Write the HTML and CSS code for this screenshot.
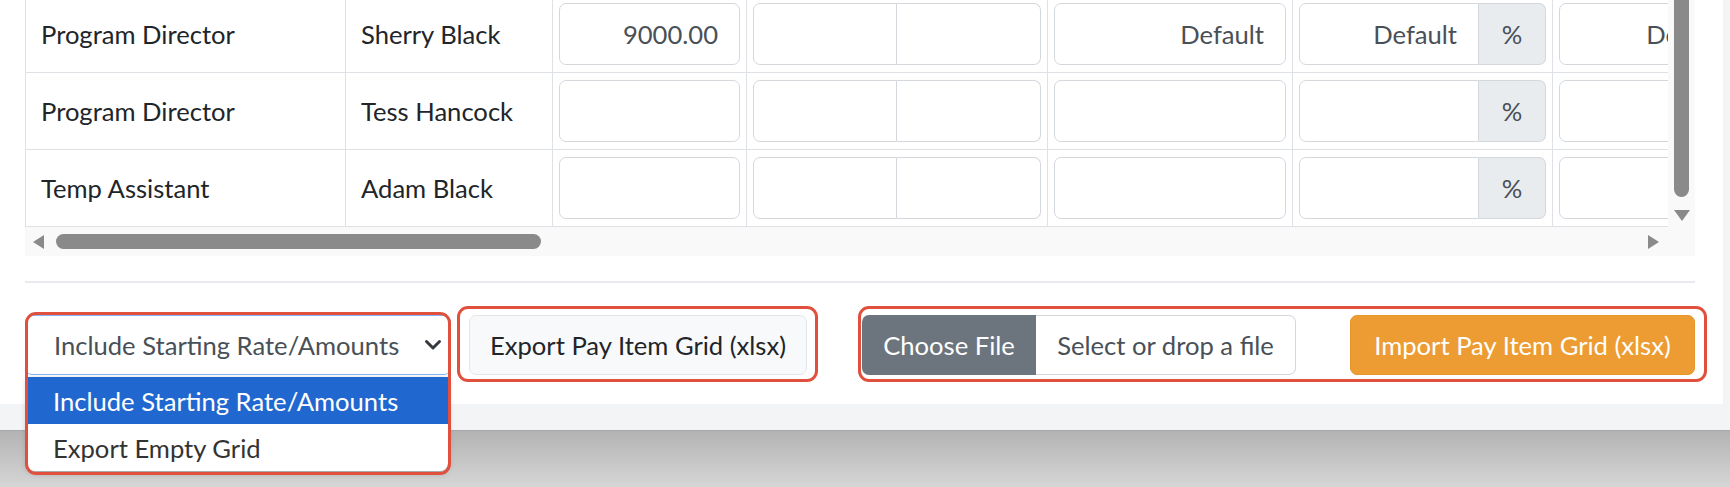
FILE: index.html
```html
<!DOCTYPE html>
<html lang="en">
<head>
<meta charset="utf-8">
<title>Pay Item Grid</title>
<link rel="stylesheet" href="styles.css">
</head>
<body>
<div class="page">
  <div class="card">
    <div class="grid-scroll">
      <div class="viewport">
        <div class="grid">
          <div class="row">
            <div class="cell text">Program Director</div>
            <div class="cell text">Sherry Black</div>
            <div class="cell"><div class="input">9000.00</div></div>
            <div class="cell"><div class="igroup"><div class="input half"></div><div class="input half"></div></div></div>
            <div class="cell"><div class="input">Default</div></div>
            <div class="cell"><div class="igroup"><div class="input grow">Default</div><div class="addon">%</div></div></div>
            <div class="cell"><div class="input">Default</div></div>
          </div>
          <div class="row">
            <div class="cell text">Program Director</div>
            <div class="cell text">Tess Hancock</div>
            <div class="cell"><div class="input"></div></div>
            <div class="cell"><div class="igroup"><div class="input half"></div><div class="input half"></div></div></div>
            <div class="cell"><div class="input"></div></div>
            <div class="cell"><div class="igroup"><div class="input grow"></div><div class="addon">%</div></div></div>
            <div class="cell"><div class="input"></div></div>
          </div>
          <div class="row">
            <div class="cell text">Temp Assistant</div>
            <div class="cell text">Adam Black</div>
            <div class="cell"><div class="input"></div></div>
            <div class="cell"><div class="igroup"><div class="input half"></div><div class="input half"></div></div></div>
            <div class="cell"><div class="input"></div></div>
            <div class="cell"><div class="igroup"><div class="input grow"></div><div class="addon">%</div></div></div>
            <div class="cell"><div class="input"></div></div>
          </div>
        </div>
      </div>
      <div class="vbar">
        <div class="vthumb"></div>
        <svg class="arrow-down" width="18" height="13" viewBox="0 0 18 13"><path d="M1 1h16L9 12z" fill="#8a8a8a"/></svg>
      </div>
      <div class="hbar">
        <svg class="arrow-left" width="13" height="16" viewBox="0 0 13 16"><path d="M12 1v14L1 8z" fill="#8a8a8a"/></svg>
        <div class="hthumb"></div>
        <svg class="arrow-right" width="13" height="16" viewBox="0 0 13 16"><path d="M1 1v14L12 8z" fill="#8a8a8a"/></svg>
      </div>
      <div class="corner"></div>
    </div>

    <div class="divider"></div>

    <div class="actions">
      <div class="select-wrap">
        <div class="select">
          <span>Include Starting Rate/Amounts</span>
          <svg class="chev" width="18" height="12" viewBox="0 0 18 12"><path d="M2.5 2.5l6.5 6.5 6.5-6.5" fill="none" stroke="#343a40" stroke-width="3" stroke-linecap="round" stroke-linejoin="round"/></svg>
        </div>
        <div class="dropdown">
          <div class="option active">Include Starting Rate/Amounts</div>
          <div class="option">Export Empty Grid</div>
        </div>
        <div class="mark mark-select"></div>
      </div>

      <div class="export-wrap">
        <button class="btn btn-light">Export Pay Item Grid (xlsx)</button>
        <div class="mark mark-export"></div>
      </div>

      <div class="import-wrap">
        <div class="file-group">
          <div class="file-btn">Choose File</div>
          <div class="file-label">Select or drop a file</div>
        </div>
        <button class="btn btn-orange">Import Pay Item Grid (xlsx)</button>
        <div class="mark mark-import"></div>
      </div>
    </div>
  </div>
</div>
<div class="desk"></div>
</body>
</html>
```

FILE: styles.css
```css
* { box-sizing: border-box; }

html, body {
  margin: 0;
  padding: 0;
}

body {
  font-family: "Lato", "Noto Sans", sans-serif;
  font-size: 25.6px;
  color: #212529;
  background: #f3f4f6;
  overflow: hidden;
}

.page {
  background: #f3f4f6;
  padding: 0 7px 26px 0;
}

.card {
  background: #fff;
  height: 404px;
  padding: 0 28px 0 25px;
}

/* ---- scrolling grid ---- */
.grid-scroll {
  display: grid;
  grid-template-columns: 1fr 27px;
  grid-template-rows: 227px 29px;
}

.viewport {
  overflow: hidden;
}

.grid {
  margin-top: -5px;
  width: 1734px;
  border-top: 1px solid #dee2e6;
  border-left: 1px solid #dee2e6;
}

.row {
  display: grid;
  grid-template-columns: 320px 207px 194px 301px 245px 260px 206px;
}

.cell {
  border-right: 1px solid #dee2e6;
  border-bottom: 1px solid #dee2e6;
  padding: 7px 6px;
  display: flex;
  align-items: center;
}

.cell.text {
  padding: 7px 15px;
  height: 77px;
  white-space: nowrap;
}

.input {
  height: 62px;
  width: 100%;
  border: 1px solid #d4d8dd;
  border-radius: 7px;
  background: #fff;
  color: #495057;
  display: flex;
  align-items: center;
  justify-content: flex-end;
  padding: 0 21px;
  white-space: nowrap;
}

.igroup {
  display: flex;
  width: 100%;
}

.igroup .half {
  width: 50%;
}

.igroup .half:first-child {
  border-radius: 7px 0 0 7px;
}

.igroup .half:last-child {
  border-radius: 0 7px 7px 0;
  border-left: none;
}

.igroup .grow {
  flex: 1;
  border-radius: 7px 0 0 7px;
}

.addon {
  width: 67px;
  height: 62px;
  background: #e9ecef;
  border: 1px solid #d4d8dd;
  border-left: none;
  border-radius: 0 7px 7px 0;
  color: #495057;
  display: flex;
  align-items: center;
  justify-content: center;
}

/* ---- fake scrollbars ---- */
.vbar {
  background: #f9f9f9;
  display: flex;
  flex-direction: column;
  align-items: center;
}

.vthumb {
  width: 15px;
  height: 197px;
  background: #8a8a8a;
  border-radius: 0 0 8px 8px;
}

.arrow-down {
  margin-top: 12px;
}

.hbar {
  background: #f9f9f9;
  display: flex;
  align-items: center;
  padding: 0 8px 0 7px;
}

.arrow-left {
  margin-right: 11px;
}

.hthumb {
  width: 485px;
  height: 15px;
  background: #8a8a8a;
  border-radius: 8px;
}

.arrow-right {
  margin-left: auto;
}

.corner {
  background: #f9f9f9;
}

.divider {
  margin-top: 25px;
  height: 2px;
  background: #e8eaed;
}

/* ---- actions ---- */
.actions {
  margin-top: 32px;
  display: flex;
  align-items: center;
}

.select-wrap,
.export-wrap,
.import-wrap {
  position: relative;
}

.select {
  width: 426px;
  height: 60px;
  border: 1px solid #86b7fe;
  border-radius: 7px;
  background: #fff;
  color: #495057;
  display: flex;
  align-items: center;
  padding: 0 8px 0 28px;
  white-space: nowrap;
}

.select .chev {
  margin-left: auto;
}

.dropdown {
  position: absolute;
  top: 62px;
  left: 2px;
  right: 3px;
  background: #fff;
  border-radius: 0 0 8px 8px;
  box-shadow: 0 2px 6px rgba(0, 0, 0, 0.25);
  overflow: hidden;
  z-index: 2;
}

.option {
  height: 47px;
  display: flex;
  align-items: center;
  padding-left: 26px;
  color: #333;
  white-space: nowrap;
}

.option.active {
  background: #2167d0;
  color: #fff;
}

.export-wrap {
  margin-left: 18px;
}

.btn {
  font: inherit;
  height: 60px;
  border-radius: 7px;
  padding: 0;
  display: flex;
  align-items: center;
  justify-content: center;
  white-space: nowrap;
}

.btn-light {
  width: 338px;
  background: #f8f9fa;
  border: 1px solid #e3e6e9;
  color: #212529;
}

.import-wrap {
  margin-left: 55px;
  flex: 1;
  display: flex;
  align-items: center;
}

.file-group {
  display: flex;
  height: 60px;
}

.file-btn {
  width: 174px;
  background: #6c757d;
  color: #fff;
  border-radius: 7px 0 0 7px;
  display: flex;
  align-items: center;
  justify-content: center;
}

.file-label {
  width: 260px;
  border: 1px solid #d4d8dd;
  border-left: none;
  border-radius: 0 7px 7px 0;
  color: #495057;
  display: flex;
  align-items: center;
  justify-content: center;
  white-space: nowrap;
}

.btn-orange {
  margin-left: auto;
  width: 345px;
  background: #ec9c32;
  border: 1px solid #e69528;
  color: #fff;
}

/* ---- annotation outlines ---- */
.mark {
  position: absolute;
  border: 3px solid #e0503c;
  border-radius: 11px;
  pointer-events: none;
  z-index: 3;
}

.mark-select {
  top: -3px;
  left: 0;
  right: 0;
  height: 163px;
}

.mark-export {
  top: -9px;
  bottom: -7px;
  left: -12px;
  right: -11px;
}

.mark-import {
  top: -9px;
  bottom: -7px;
  left: -4px;
  right: -12px;
}

.desk {
  height: 57px;
  background: linear-gradient(#b3b3b3, #d6d6d6);
  border-top: 1px solid #a8a8a8;
}
```
